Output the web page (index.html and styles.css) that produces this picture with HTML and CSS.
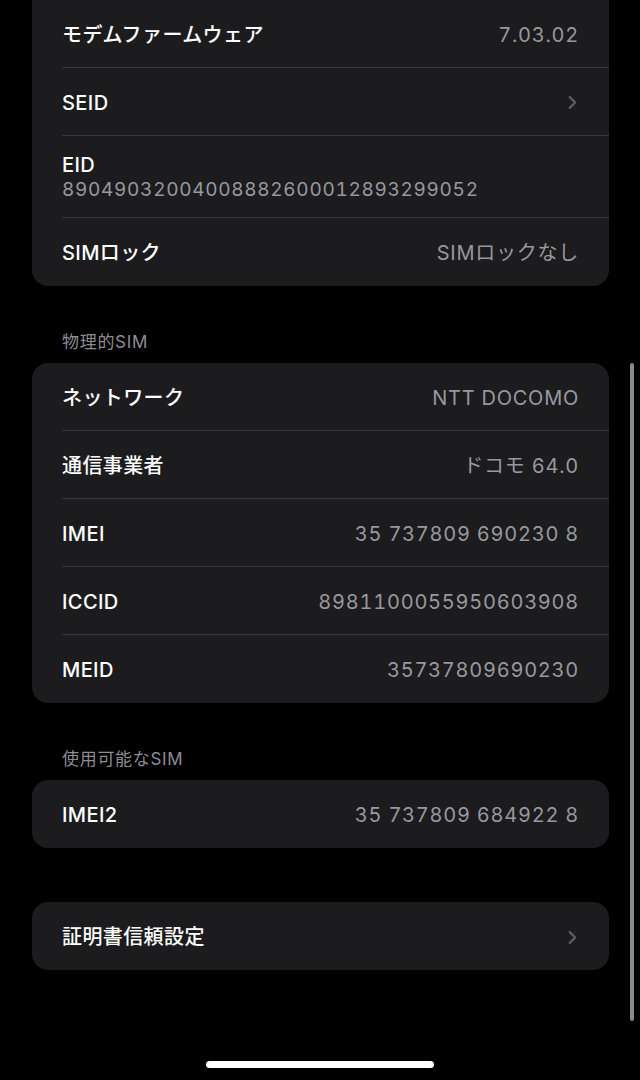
FILE: index.html
```html
<!DOCTYPE html>
<html>
  <head>
    <meta charset="UTF-8" />
    <title>情報</title>
    <link rel="stylesheet" href="styles.css">
  </head>
  <body>
    <div class="page">
      <div class="card card-top">
        <div class="row">
          <span class="label">モデムファームウェア</span>
          <span class="value">7.03.02</span>
        </div>
        <div class="row">
          <span class="label">SEID</span>
          <svg class="chevron" viewBox="0 0 10 16" width="9" height="15"><path d="M2 2 L8 8 L2 14" /></svg>
        </div>
        <div class="row row-stack">
          <span class="label">EID</span>
          <span class="value-sub">89049032004008882600012893299052</span>
        </div>
        <div class="row">
          <span class="label">SIMロック</span>
          <span class="value">SIMロックなし</span>
        </div>
      </div>

      <div class="section-title">物理的SIM</div>
      <div class="card">
        <div class="row">
          <span class="label">ネットワーク</span>
          <span class="value">NTT DOCOMO</span>
        </div>
        <div class="row">
          <span class="label">通信事業者</span>
          <span class="value">ドコモ 64.0</span>
        </div>
        <div class="row">
          <span class="label">IMEI</span>
          <span class="value">35 737809 690230 8</span>
        </div>
        <div class="row">
          <span class="label">ICCID</span>
          <span class="value">8981100055950603908</span>
        </div>
        <div class="row">
          <span class="label">MEID</span>
          <span class="value">35737809690230</span>
        </div>
      </div>

      <div class="section-title">使用可能なSIM</div>
      <div class="card">
        <div class="row">
          <span class="label">IMEI2</span>
          <span class="value">35 737809 684922 8</span>
        </div>
      </div>

      <div class="card card-gap">
        <div class="row">
          <span class="label">証明書信頼設定</span>
          <svg class="chevron" viewBox="0 0 10 16" width="9" height="15"><path d="M2 2 L8 8 L2 14" /></svg>
        </div>
      </div>
    </div>

    <div class="scrollbar"></div> <!-- scroll indicator -->
    <div class="home-indicator"></div>
  </body>
</html>
```

FILE: styles.css
```css
body {
    margin: 0;
    background-color: #000;
    font-family: Inter, "Noto Sans CJK JP", sans-serif;
    color: #fff;
    height: 1080px;
    overflow: hidden;
}
.page {
    padding: 0 31px 0 32px;
}
.card {
    background-color: #1c1c1e;
    border-radius: 16px;
    overflow: hidden;
}
.card-top {
    border-radius: 0 0 16px 16px;
}
.card-gap {
    margin-top: 54px;
}
.row {
    display: flex;
    align-items: center;
    justify-content: space-between;
    height: 68px;
    margin-left: 30px;
    padding: 2px 30px 0 0;
    border-bottom: 1px solid #38383a;
    box-sizing: border-box;
}
.row:last-child { border-bottom: none; }
.row-stack {
    flex-direction: column;
    align-items: flex-start;
    justify-content: center;
    height: 82px;
    gap: 1px;
}
.label {
    font-size: 20px;
    font-weight: 500;
    line-height: 24px;
    letter-spacing: 0.4px;
}
.value {
    font-size: 20px;
    line-height: 24px;
    color: #98989f;
    letter-spacing: 0.75px;
    font-variant-numeric: tabular-nums;
}
.value-sub {
    font-size: 19px;
    line-height: 24px;
    color: #98989f;
    letter-spacing: 0.7px;
    font-variant-numeric: tabular-nums;
}
.chevron {
    fill: none;
    stroke: #5b5b60;
    stroke-width: 2.6;
    stroke-linecap: round;
    stroke-linejoin: round;
    margin-right: 2px;
}
.section-title {
    font-size: 17px;
    line-height: 20px;
    color: #8d8d93;
    letter-spacing: 0.7px;
    padding: 46px 30px 11px;
}
/* overlays */
.scrollbar {
    position: fixed;
    top: 363px;
    right: 6px;
    width: 4px;
    height: 658px;
    border-radius: 2px;
    background-color: #8a8a8d;
}
.home-indicator {
    position: fixed;
    bottom: 12px;
    left: 206px;
    width: 228px;
    height: 7px;
    border-radius: 4px;
    background-color: #fff;
}
```
